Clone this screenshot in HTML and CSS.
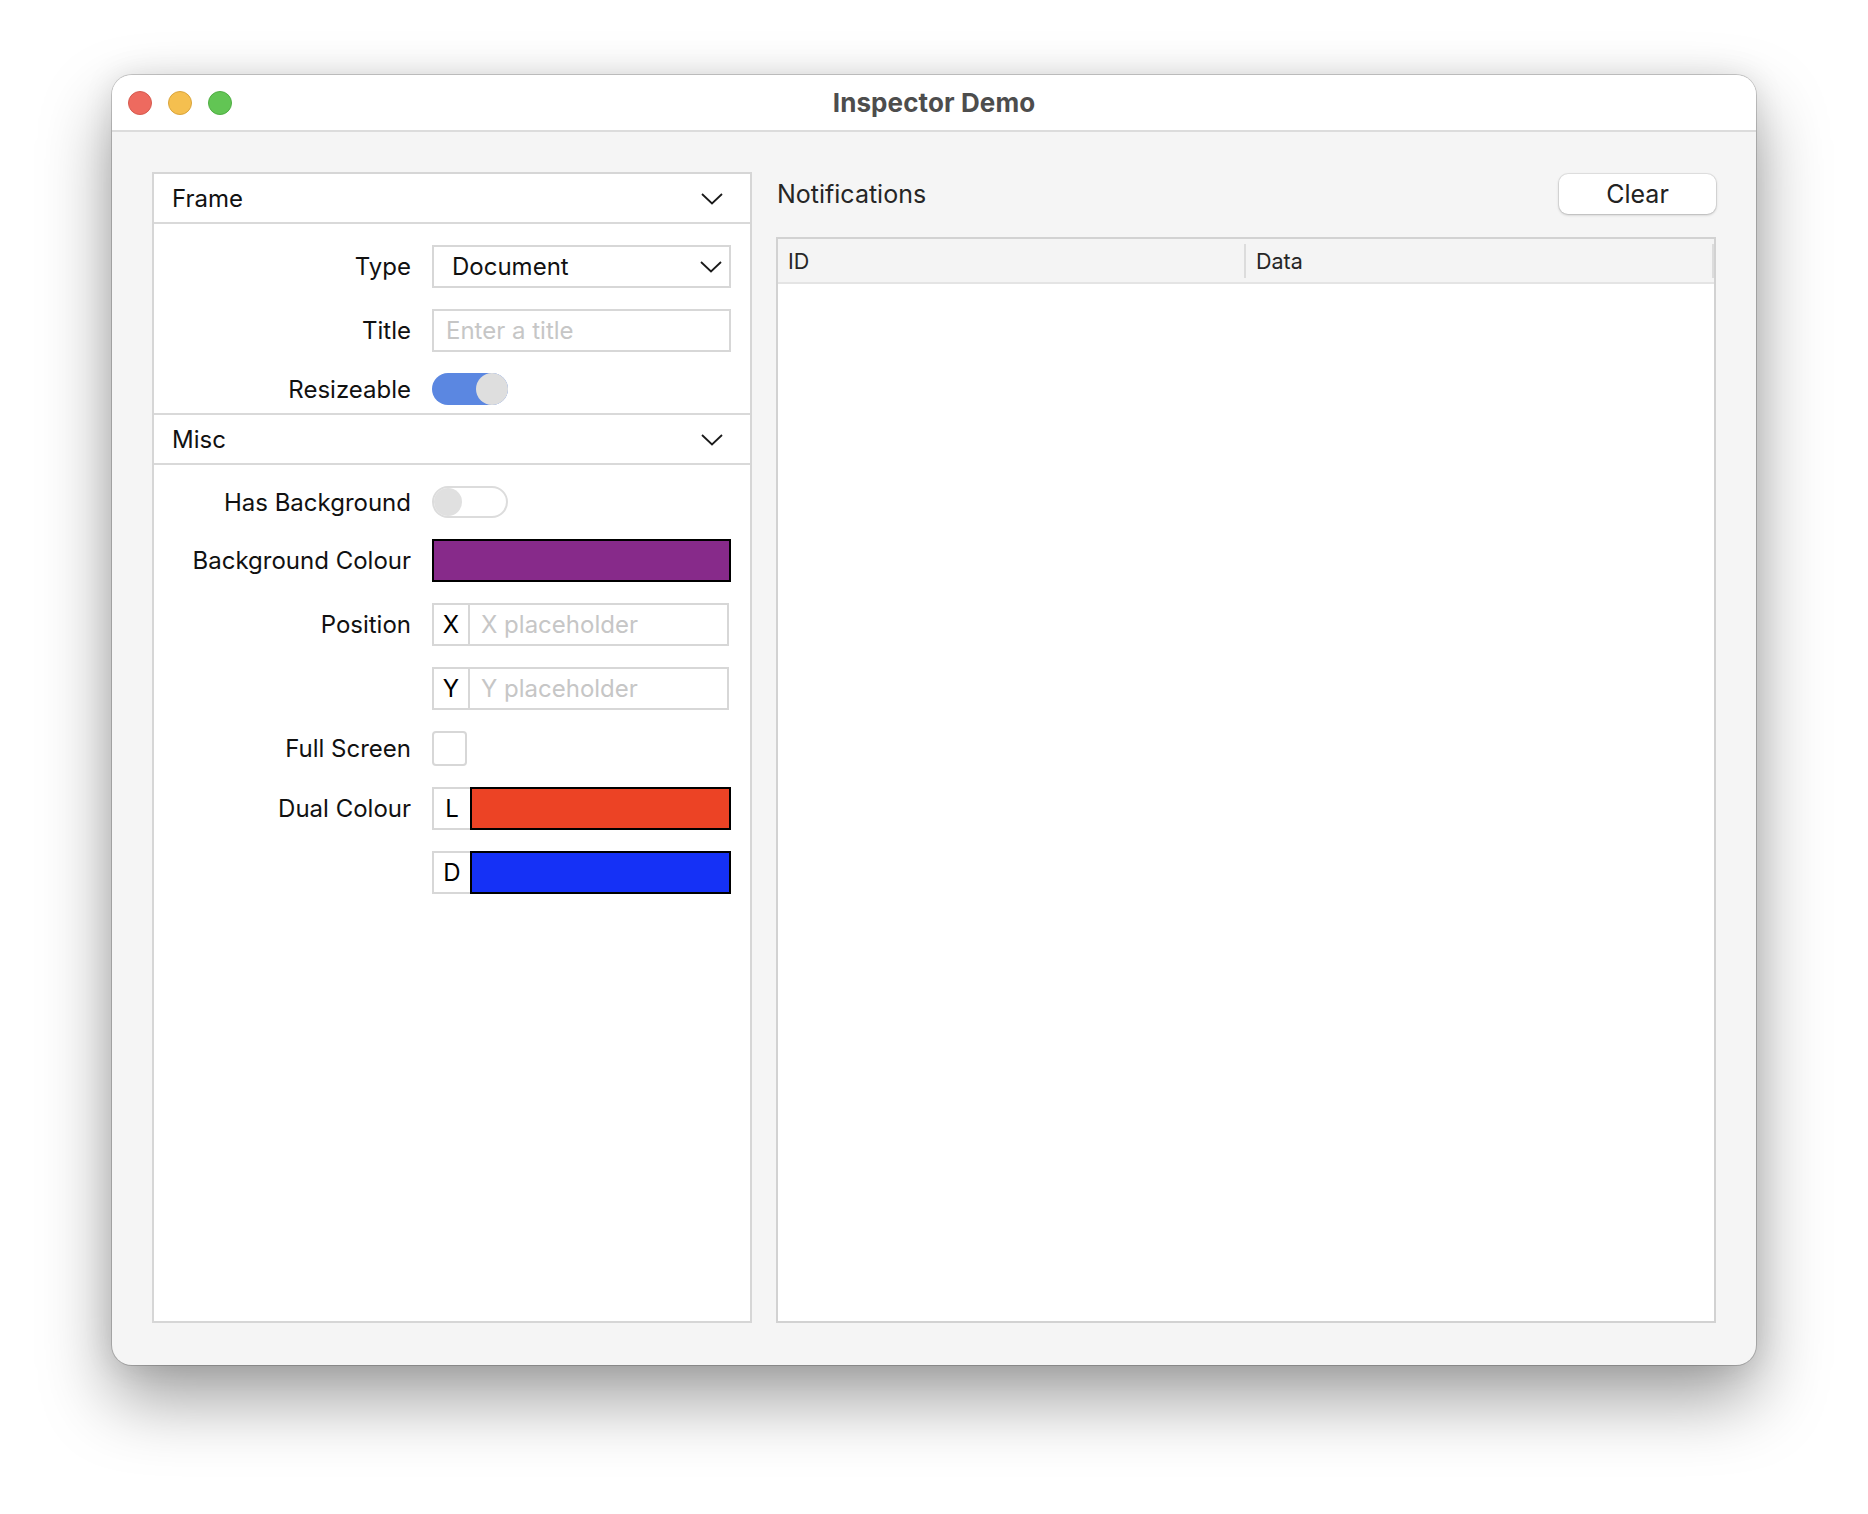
FILE: index.html
```html
<!DOCTYPE html>
<html>
<head>
<meta charset="utf-8">
<link rel="stylesheet" href="styles.css">
<title>Inspector Demo</title>
</head>
<body>
<div class="window">
  <div class="titlebar">
    <div class="lights">
      <span class="light red"></span>
      <span class="light yellow"></span>
      <span class="light green"></span>
    </div>
    <div class="title">Inspector Demo</div>
  </div>
  <div class="content">
    <div class="inspector">
      <div class="section-header">
        <span>Frame</span>
        <svg class="chev" width="22" height="12" viewBox="0 0 22 12"><polyline points="1,1 11,10.5 21,1" fill="none" stroke="#1a1a1a" stroke-width="1.8"/></svg>
      </div>
      <div class="section-body frame-body">
        <div class="row">
          <div class="label">Type</div>
          <div class="control select">
            <span>Document</span>
            <svg class="chev" width="22" height="12" viewBox="0 0 22 12"><polyline points="1,1 11,10.5 21,1" fill="none" stroke="#1a1a1a" stroke-width="1.8"/></svg>
          </div>
        </div>
        <div class="row">
          <div class="label">Title</div>
          <div class="control input"><span class="ph">Enter a title</span></div>
        </div>
        <div class="row short">
          <div class="label">Resizeable</div>
          <div class="toggle on"><span class="knob"></span></div>
        </div>
      </div>
      <div class="section-header">
        <span>Misc</span>
        <svg class="chev" width="22" height="12" viewBox="0 0 22 12"><polyline points="1,1 11,10.5 21,1" fill="none" stroke="#1a1a1a" stroke-width="1.8"/></svg>
      </div>
      <div class="section-body misc-body">
        <div class="row short">
          <div class="label">Has Background</div>
          <div class="toggle off"><span class="knob"></span></div>
        </div>
        <div class="row">
          <div class="label">Background Colour</div>
          <div class="control swatch purple"></div>
        </div>
        <div class="row">
          <div class="label">Position</div>
          <div class="control pair">
            <span class="tag">X</span>
            <span class="field"><span class="ph">X placeholder</span></span>
          </div>
        </div>
        <div class="row">
          <div class="label"></div>
          <div class="control pair">
            <span class="tag">Y</span>
            <span class="field"><span class="ph">Y placeholder</span></span>
          </div>
        </div>
        <div class="row check-row">
          <div class="label">Full Screen</div>
          <div class="checkbox"></div>
        </div>
        <div class="row">
          <div class="label">Dual Colour</div>
          <div class="control dual">
            <span class="tag">L</span>
            <span class="swatch red-swatch"></span>
          </div>
        </div>
        <div class="row">
          <div class="label"></div>
          <div class="control dual">
            <span class="tag">D</span>
            <span class="swatch blue-swatch"></span>
          </div>
        </div>
      </div>
    </div>
    <div class="notifications">
      <div class="notif-head">
        <div class="notif-title">Notifications</div>
        <button class="clear">Clear</button>
      </div>
      <div class="table">
        <div class="thead">
          <div class="th">ID</div>
          <div class="th sep">Data</div>
        </div>
        <div class="tbody"></div>
      </div>
    </div>
  </div>
</div>
</body>
</html>
```

FILE: styles.css
```css
* { box-sizing: border-box; }
html, body { margin: 0; padding: 0; background: #ffffff; }
body {
  font-family: Inter, "Noto Sans", "Liberation Sans", sans-serif;
  color: #111;
  padding-top: 75px;
  height: 1514px;
  overflow: hidden;
}
.window {
  width: 1644px;
  height: 1290px;
  margin: 0 auto;
  border-radius: 20px;
  background: #f5f5f5;
  overflow: hidden;
  box-shadow: 0 0 0 1px rgba(0,0,0,0.18), 0 34px 70px rgba(0,0,0,0.38), 0 0 30px rgba(0,0,0,0.10);
  display: flex;
  flex-direction: column;
}
.titlebar {
  height: 57px;
  background: #ffffff;
  border-bottom: 2px solid #dcdcdc;
  position: relative;
  display: flex;
  align-items: center;
  justify-content: center;
  flex-shrink: 0;
}
.lights {
  position: absolute;
  left: 16px;
  top: 16px;
  display: flex;
  gap: 16px;
}
.light {
  width: 24px;
  height: 24px;
  border-radius: 50%;
  display: block;
}
.red { background: #ee6a5f; border: 1px solid #d55a4f; }
.yellow { background: #f5bf4f; border: 1px solid #d9a43c; }
.green { background: #62c554; border: 1px solid #4fad43; }
.title {
  font-weight: 700;
  font-size: 26px;
  color: #4d4d4d;
  letter-spacing: 0.1px;
}
.content {
  flex: 1;
  display: flex;
  gap: 24px;
  padding: 40px 40px 42px 40px;
  min-height: 0;
}
.inspector {
  width: 600px;
  background: #ffffff;
  border: 2px solid #d6d6d6;
  display: flex;
  flex-direction: column;
}
.section-header {
  height: 50px;
  display: flex;
  align-items: center;
  justify-content: space-between;
  padding: 0 27px 0 18px;
  font-size: 24px;
  color: #111;
  border-bottom: 2px solid #d9d9d9;
  flex-shrink: 0;
}
.section-header .chev { margin-top: 2px; }
.section-body {
  display: flex;
  flex-direction: column;
  gap: 21px;
}
.frame-body {
  padding: 21px 0 8px 0;
  border-bottom: 2px solid #d9d9d9;
}
.misc-body {
  padding: 21px 0 0 0;
}
.row {
  display: flex;
  align-items: center;
  height: 43px;
  gap: 21px;
}
.row.short { height: 32px; }
.row.check-row { height: 35px; }
.label {
  width: 257px;
  text-align: right;
  font-size: 24px;
  color: #111;
  flex-shrink: 0;
}
.control {
  width: 299px;
  height: 43px;
  border: 2px solid #d7d7d7;
  background: #fff;
  display: flex;
  align-items: center;
  font-size: 24px;
}
.select {
  justify-content: space-between;
  padding: 0 7px 0 18px;
  color: #111;
}
.input { padding: 0 12px; }
.ph { color: #c6c6c6; }
.toggle {
  width: 76px;
  height: 32px;
  border-radius: 16px;
  position: relative;
  display: flex;
  align-items: center;
}
.toggle.on {
  background: #5b87e1;
  justify-content: flex-end;
}
.toggle.off {
  background: #ffffff;
  border: 2px solid #dcdcdc;
  justify-content: flex-start;
}
.knob {
  width: 32px;
  height: 32px;
  border-radius: 50%;
  background: #dedede;
  display: block;
}
.toggle.off .knob { width: 28px; height: 28px; background: #e0e0e0; }
.swatch.purple {
  background: #872a8a;
  border: 2px solid #000;
}
.pair {
  width: 297px;
}
.tag {
  width: 36px;
  height: 100%;
  display: flex;
  align-items: center;
  justify-content: center;
  border-right: 2px solid #d7d7d7;
  font-size: 24px;
  color: #000;
  flex-shrink: 0;
}
.field {
  flex: 1;
  padding: 0 11px;
  display: flex;
  align-items: center;
}
.dual {
  border: none;
  background: transparent;
}
.dual .tag {
  height: 43px;
  border: 2px solid #d7d7d7;
  border-right: none;
  background: #fff;
  width: 38px;
}
.dual .swatch {
  flex: 1;
  height: 43px;
  border: 2px solid #000;
}
.red-swatch { background: #ec4325; }
.blue-swatch { background: #1531f6; }
.checkbox {
  width: 35px;
  height: 35px;
  border: 2px solid #d7d7d7;
  border-radius: 4px;
  background: #fff;
}
.notifications {
  flex: 1;
  display: flex;
  flex-direction: column;
}
.notif-head {
  display: flex;
  justify-content: space-between;
  align-items: center;
  height: 42px;
  margin-top: 1px;
  margin-bottom: 22px;
}
.notif-title {
  font-size: 25px;
  color: #262626;
  padding-left: 1px;
}
.clear {
  width: 157px;
  height: 40px;
  border: none;
  border-radius: 9px;
  background: #ffffff;
  box-shadow: 0 0 0 1px rgba(0,0,0,0.07), 0 1px 3px rgba(0,0,0,0.22);
  font-family: Inter, "Noto Sans", "Liberation Sans", sans-serif;
  font-size: 25px;
  color: #222;
  padding: 0;
}
.table {
  flex: 1;
  border: 2px solid #d2d2d2;
  background: #fff;
  display: flex;
  flex-direction: column;
}
.thead {
  height: 45px;
  background: #f4f4f4;
  border-bottom: 2px solid #e4e4e4;
  display: flex;
  align-items: center;
  flex-shrink: 0;
}
.th {
  flex: 1;
  font-size: 21.5px;
  color: #262626;
  padding-left: 10px;
  height: 100%;
  display: flex;
  align-items: center;
}
.th.sep {
  position: relative;
  border-left: 2px solid #dcdcdc;
  border-right: 2px solid #dcdcdc;
  height: 34px;
}
.tbody { flex: 1; }
```
